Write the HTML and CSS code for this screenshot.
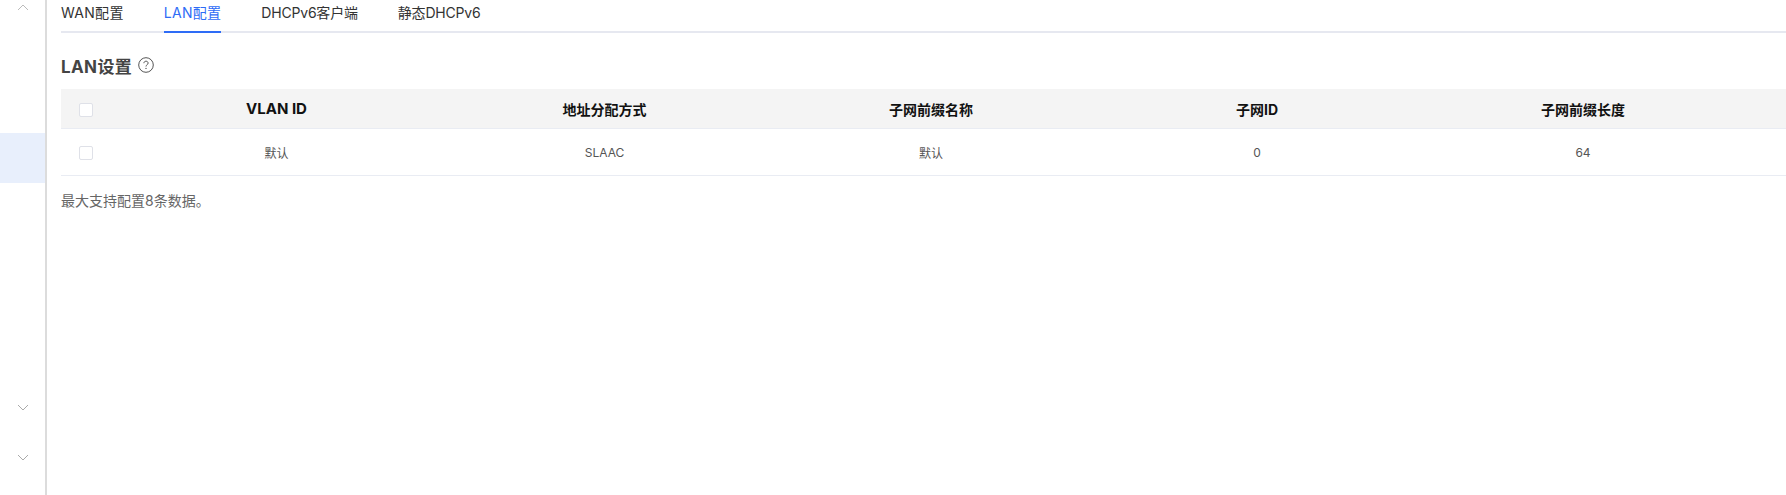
FILE: index.html
```html
<!DOCTYPE html>
<html lang="zh-CN">
<head>
    <meta charset="UTF-8">
    <title>LAN配置</title>
    <link rel="stylesheet" href="styles.css">
</head>
<body>
    <div class="layout">
        <aside class="sidebar">
            <div class="side-item side-top">
                <svg width="12" height="7" viewBox="0 0 12 7"><path d="M1 6l5-5 5 5" fill="none" stroke="#bbb" stroke-width="1"/></svg>
            </div>
            <div class="side-active"></div>
            <div class="side-bottom">
                <div class="side-item">
                    <svg width="12" height="7" viewBox="0 0 12 7"><path d="M1 1l5 5 5-5" fill="none" stroke="#aaa" stroke-width="1"/></svg>
                </div>
                <div class="side-item">
                    <svg width="12" height="7" viewBox="0 0 12 7"><path d="M1 1l5 5 5-5" fill="none" stroke="#aaa" stroke-width="1"/></svg>
                </div>
            </div>
        </aside>

        <main class="content">
            <nav class="tabs">
                <a href="#" class="tab">WAN配置</a>
                <a href="#" class="tab active">LAN配置</a>
                <a href="#" class="tab tab-long">DHCPv6客户端</a>
                <a href="#" class="tab tab-long">静态DHCPv6</a>
            </nav>

            <div class="section-title">
                <h2>LAN设置</h2>
                <svg width="16" height="16" viewBox="0 0 16 16" class="help">
                    <circle cx="8" cy="8" r="7.3" fill="none" stroke="#555" stroke-width="1"/>
                    <path d="M5.9 6.2c0-1.2.9-2 2.1-2s2.1.8 2.1 1.9c0 1.7-2.1 1.6-2.1 3.4" fill="none" stroke="#555" stroke-width="1"/>
                    <circle cx="8" cy="11.4" r=".7" fill="#555"/>
                </svg>
            </div>

            <table class="data-table">
                <colgroup>
                    <col class="col-check">
                    <col class="col-vlan">
                    <col class="col-mode">
                    <col class="col-name">
                    <col class="col-id">
                    <col class="col-len">
                    <col>
                </colgroup>
                <thead>
                    <tr>
                        <th class="check-cell"><span class="checkbox"></span></th>
                        <th class="th-latin">VLAN ID</th>
                        <th>地址分配方式</th>
                        <th>子网前缀名称</th>
                        <th>子网ID</th>
                        <th>子网前缀长度</th>
                        <th></th>
                    </tr>
                </thead>
                <tbody>
                    <tr>
                        <td class="check-cell"><span class="checkbox"></span></td>
                        <td>默认</td>
                        <td>SLAAC</td>
                        <td>默认</td>
                        <td>0</td>
                        <td>64</td>
                        <td></td>
                    </tr>
                </tbody>
            </table>

            <p class="note">最大支持配置8条数据。</p>
        </main>
    </div>
</body>
</html>
```

FILE: styles.css
```css
html, body {
    height: 100%;
}
body {
    margin: 0;
    background-color: #fff;
    font-family: Inter, "Noto Sans CJK SC", sans-serif;
    overflow: hidden;
}
.layout {
    display: flex;
    height: 495px;
}
.sidebar {
    width: 45px;
    flex-shrink: 0;
    border-right: 2px solid #dcdcdc;
    display: flex;
    flex-direction: column;
}
.side-item {
    height: 50px;
    display: flex;
    justify-content: center;
    align-items: center;
}
.side-top {
    height: 14px;
    margin-bottom: 119px;
}
.side-active {
    height: 50px;
    background-color: #e8effc;
}
.side-bottom {
    margin-top: auto;
    padding-bottom: 13px;
}
.content {
    flex: 1;
    min-width: 0;
    padding-left: 14px;
}
.tabs {
    display: flex;
    gap: 40px;
    height: 31px;
    border-bottom: 2px solid #e6e8f0;
}
.tab {
    height: 33px;
    box-sizing: border-box;
    line-height: 26px;
    font-size: 14px;
    letter-spacing: .3px;
    color: #333;
    text-decoration: none;
}
.tab-long {
    letter-spacing: -.2px;
}
.tab.active {
    color: #2e6cf6;
    border-bottom: 2px solid #2e6cf6;
}
.section-title {
    display: flex;
    align-items: center;
    gap: 6px;
    height: 24px;
    margin-top: 20px;
    margin-bottom: 12px;
}
.section-title h2 {
    margin: 0;
    font-size: 17px;
    font-weight: 700;
    letter-spacing: .4px;
    color: #444;
}
.data-table {
    width: 100%;
    table-layout: fixed;
    border-collapse: collapse;
    font-size: 12px;
    color: #555;
}
.col-check { width: 51px; }
.col-vlan { width: 329px; }
.col-mode { width: 327px; }
.col-name { width: 326px; }
.col-id { width: 326px; }
.col-len { width: 326px; }
.data-table th {
    height: 39px;
    padding: 0;
    background-color: #f4f4f4;
    border-bottom: 1px solid #e9ecf3;
    font-size: 14px;
    font-weight: 700;
    color: #111;
}
.data-table .th-latin {
    font-size: 15px;
}
.data-table td {
    height: 46px;
    padding: 0;
    text-align: center;
    border-bottom: 1px solid #e9ecf3;
}
.data-table .check-cell {
    box-sizing: border-box;
    text-align: left;
    padding: 2px 0 0 18px;
}
.checkbox {
    display: block;
    width: 14px;
    height: 14px;
    box-sizing: border-box;
    background-color: #fff;
    border: 1px solid #dfe1e8;
    border-radius: 2px;
}
.note {
    margin: 15px 0 0;
    font-size: 14px;
    line-height: 20px;
    color: #666;
}
```
